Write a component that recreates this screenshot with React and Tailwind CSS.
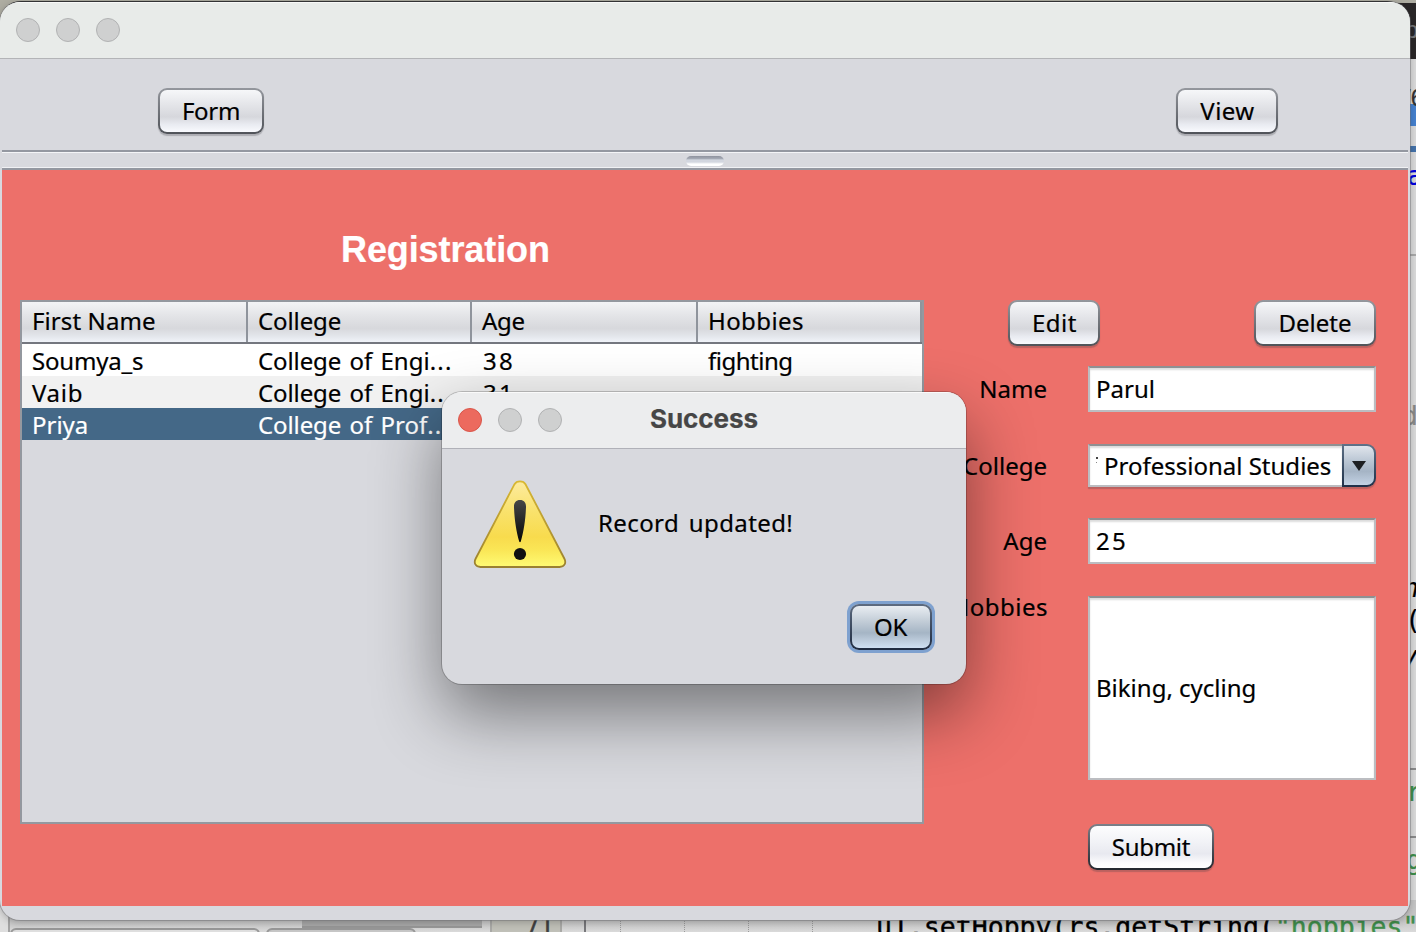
import React from "react";

const BTN_TEXT = "text-[24px] leading-[32px] whitespace-pre";

function Button({ children, className = "", tone = "plain", text = "" }) {
  const border =
    tone === "strong"
      ? "bg-linear-to-b from-[#7b8089] to-[#23272f]"
      : "bg-linear-to-b from-[#94979d] to-[#505359]";
  const face =
    tone === "strong"
      ? "bg-[linear-gradient(to_bottom,#fdfdfe_0%,#f1f2f6_40%,#e8e9f0_66%,#fbfbfd_88%,#ffffff_100%)]"
      : "bg-[linear-gradient(to_bottom,#f6f7f9_0%,#e4e5e9_35%,#d6d7dc_64%,#e9ebf1_82%,#f9fafe_100%)]";
  return (
    <button
      className={`h-[46px] shrink-0 rounded-[9px] p-[2px] shadow-[0_2px_1px_rgba(60,60,70,0.28)] ${border} ${className}`}
    >
      <span
        className={`flex h-full w-full items-center justify-center rounded-[7px] ${face} ${BTN_TEXT} ${text}`}
      >
        {children}
      </span>
    </button>
  );
}

function Lights({ red = false }) {
  const gray = "size-6 rounded-full border border-[#b1b2b3] bg-[#cfd0d0]";
  return (
    <div className="flex gap-4">
      <span className={red ? "size-6 rounded-full border border-[#d9564a] bg-[#ec6a5e]" : gray} />
      <span className={gray} />
      <span className={gray} />
    </div>
  );
}

const FIELD =
  "flex w-[288px] shrink-0 items-center border-2 border-[#bcbdc1] border-t-[#8f9092] bg-white pl-[6px] shadow-[inset_0_2px_2px_rgba(0,0,0,0.14)]";

function HeadCell({ children, className }) {
  return (
    <div
      className={`h-10 shrink-0 border-r-2 border-[#8f949c] bg-[linear-gradient(to_bottom,#f3f4f6_0%,#e3e4e7_35%,#d7d8dc_66%,#e2e5ea_84%,#f0f3f9_100%)] leading-[38px] ${className}`}
    >
      {children}
    </div>
  );
}

function Row({ cells, className }) {
  return (
    <div className={`flex h-8 leading-[33px] ${className}`}>
      <span className="w-[226px] pl-[10px]">{cells[0]}</span>
      <span className="w-[224px] pl-[10px]">{cells[1]}</span>
      <span className="w-[226px] pl-[11px] tracking-[2.2px]">{cells[2]}</span>
      <span className="pl-[10px] tracking-[-0.5px]">{cells[3]}</span>
    </div>
  );
}

function College({ rest }) {
  return (
    <>
      <span className="tracking-[-0.1px]">College</span>
      <span className="[word-spacing:2px]"> of {rest}</span>
      <span className="tracking-[1.2px]">...</span>
    </>
  );
}

function Desktop() {
  return (
    <div className="absolute inset-0 overflow-hidden bg-[#dcdcdc] font-['DejaVu_Sans_Mono',monospace] text-[26.5px] leading-8 whitespace-pre">
      <div className="absolute top-0 left-0 h-8 w-full bg-[#aeada2]" />
      <div className="absolute top-[3px] right-0 h-[56px] w-20 bg-[#2a2728]" />
      <div className="absolute top-[1px] left-0 h-7 w-[1408px] rounded-t-[21px] bg-black" />
      <span className="absolute top-[14px] left-[1405px] font-['Liberation_Sans',sans-serif] text-[24px] text-[#77787a]">p</span>
      <div className="absolute top-[104px] left-[1400px] h-[22px] w-4 bg-[#4682d0]" />
      <div className="absolute top-[146px] left-[1400px] h-[6px] w-4 bg-[#4573aa]" />
      <span className="absolute top-[82px] left-[1404px] font-['Liberation_Sans',sans-serif] text-[24px] text-[#333]">/6</span>
      <span className="absolute top-[160px] left-[1407px] text-[#0000e0]">a</span>
      <div className="absolute top-[254px] left-[1400px] h-[2px] w-4 bg-[#a9a9a9]" />
      <span className="absolute top-[400px] left-[1402px] text-[#8a8a8a]">d</span>
      <span className="absolute top-[572px] left-[1403px] text-black italic">n</span>
      <span className="absolute top-[604px] left-[1405px] text-black">(</span>
      <span className="absolute top-[640px] left-[1402px] text-black italic">y</span>
      <div className="absolute top-[768px] left-[1400px] h-[2px] w-4 bg-[#8c8c8c]" />
      <span className="absolute top-[776px] left-[1406px] text-[#3f8f4b]">r</span>
      <div className="absolute top-[836px] left-[1400px] h-[2px] w-4 bg-[#8c8c8c]" />
      <span className="absolute top-[844px] left-[1406px] text-[#3f8f4b]">g</span>
      <div className="absolute top-[900px] left-0 flex h-8 w-full bg-[linear-gradient(to_bottom,#c6c6c6_62%,#dadada_100%)]">
        <div className="w-[10px] shrink-0 border-r-2 border-[#a3a3a3] bg-[#dedede]" />
        <div className="mt-[28px] h-6 w-[250px] shrink-0 rounded-md border-2 border-[#989898] bg-[#dfdfdf]" />
        <div className="mt-[28px] ml-[6px] h-6 w-[150px] shrink-0 rounded-md border-2 border-[#989898] bg-[#c6c6c6]" />
        <div className="-ml-[114px] h-[28px] w-[180px] shrink-0 border-b-2 border-[#989898] bg-[#a9a9a9]" />
        <div className="ml-[8px] w-[72px] shrink-0 border-x-2 border-[#a9a9a6] bg-[#c0c0b8]" />
        <div className="w-[24px] shrink-0 border-r-2 border-[#77777a]" />
        <div className="ml-[34px] w-[64px] shrink-0 border-l border-dotted border-[#9a9a9a]" />
        <div className="w-[64px] shrink-0 border-l border-dotted border-[#9a9a9a]" />
        <div className="w-[64px] shrink-0 border-l border-dotted border-[#9a9a9a]" />
        <div className="w-[64px] shrink-0 border-l border-dotted border-[#9a9a9a]" />
      </div>
      <span className="absolute top-[911px] left-[525px] text-[24px] text-[#404040] [-webkit-text-stroke:0.4px]">71</span>
      <span className="absolute top-[911px] left-[876px] text-black [-webkit-text-stroke:0.4px]">
        u1.setHobby(rs.getString(<span className="text-[#3f8f4b]">"hobbies"</span>
      </span>
    </div>
  );
}

function MainWindow() {
  return (
    <div className="absolute top-[2px] left-0 flex h-[918px] w-[1410px] flex-col overflow-hidden rounded-[20px] bg-[#d8d9de] shadow-[0_0_0_1px_rgba(110,110,115,0.45),0_2px_8px_rgba(0,0,0,0.25)]">
      <div className="flex h-[57px] shrink-0 items-center border-b border-[#b3b4b7] bg-[#e8ebe9] pl-4 shadow-[inset_0_1px_0_#f8f9f8]">
        <Lights />
      </div>
      <div className="mx-[2px] flex h-[93px] shrink-0 justify-between border-b-2 border-[#9498a1] pt-[29px] pr-[130px] pl-[156px]">
        <Button className="w-[106px]" text="tracking-[-0.3px]">Form</Button>
        <Button className="w-[102px]" text="tracking-[0.45px] pl-px">View</Button>
      </div>
      <div className="mx-[2px] flex h-[18px] shrink-0 justify-center border-y border-b-2 border-t-[#f4f5f7] border-b-[#9498a1] pt-[3px] shadow-[inset_0_-1px_0_#f0f1f4]">
        <div className="h-[10px] w-[38px] rounded-full bg-[linear-gradient(to_bottom,#8e929d_0%,#a3a8b3_25%,#d2d6df_40%,#d2d6df_60%,#ffffff_80%,#ffffff_100%)]" />
      </div>
      <div className="mx-[2px] flex h-[736px] shrink-0 bg-[#ed706a]">
        <div className="flex w-[922px] shrink-0 flex-col pl-[18px]">
          <h1 className="mt-[59px] ml-[321px] font-['Liberation_Sans',sans-serif] text-[36px] leading-[42px] font-bold tracking-[-0.1px] text-white">
            Registration
          </h1>
          <div className="mt-[29px] h-[524px] w-[904px] border-2 border-[#94989f] bg-[#d8d9de]">
            <div className="flex border-b-2 border-[#74777f]">
              <HeadCell className="w-[226px] pl-[10px] tracking-[0.1px]">First Name</HeadCell>
              <HeadCell className="w-[224px] pl-[10px] tracking-[-0.1px]">College</HeadCell>
              <HeadCell className="w-[226px] pl-[10px] tracking-[-0.3px]">Age</HeadCell>
              <HeadCell className="w-[224px] pl-[10px] tracking-[0.4px]">Hobbies</HeadCell>
            </div>
            <Row
              className="bg-white"
              cells={[<span className="tracking-[-0.2px]">Soumya_s</span>, <College rest="Engi" />, "38", "fighting"]}
            />
            <Row
              className="bg-[#f1f1f1]"
              cells={[<span className="tracking-[0.7px]">Vaib</span>, <College rest="Engi" />, "31", ""]}
            />
            <Row
              className="bg-[#446887] text-white"
              cells={[<span>Priya</span>, <College rest="Prof" />, "", ""]}
            />
          </div>
        </div>

        <div className="flex flex-col">
          <div className="mt-[130px] flex gap-[154px] pl-[84px]">
            <Button className="w-[92px]" text="tracking-[0.5px] pl-px">Edit</Button>
            <Button className="w-[122px]">Delete</Button>
          </div>
          <div className="mt-5 flex h-[46px] items-center gap-[41px]">
            <label className="w-[123px] text-right">Name</label>
            <div className={`h-[46px] ${FIELD}`}>
              <span>Parul</span>
            </div>
          </div>
          <div className="mt-8 flex h-[43px] items-center gap-[41px]">
            <label className="w-[123px] text-right">College</label>
            <div className="flex h-[43px] w-[288px] rounded-r-[9px] shadow-[0_2px_1px_rgba(60,60,70,0.28)]">
              <div className="flex w-[254px] items-center border-2 border-r-0 border-[#bcbdc1] border-t-[#8f9092] bg-white pl-[6px] shadow-[inset_0_2px_2px_rgba(0,0,0,0.14)]">
                <span className="flex w-[6px] shrink-0 flex-col gap-[3px] pb-[11px]">
                  <span className="size-[2px] bg-[#444]" />
                  <span className="size-[1px] bg-[#888]" />
                </span>
                <span className="pl-[2px] whitespace-pre">Professional Studies</span>
              </div>
              <div className="w-[34px] rounded-r-[9px] bg-linear-to-b from-[#5f7288] to-[#1f3048] p-[2px]">
                <div className="flex h-full items-center justify-center rounded-r-[7px] bg-[linear-gradient(to_bottom,#e0e5ec_0%,#b9c5d3_40%,#a5b4c5_65%,#c3d2e4_100%)]">
                  <svg width="14" height="10" viewBox="0 0 14 10">
                    <path d="M0 0H14L7 10Z" fill="#1d1f22" />
                  </svg>
                </div>
              </div>
            </div>
          </div>
          <div className="mt-[31px] flex h-[46px] items-center gap-[41px]">
            <label className="w-[123px] text-right">Age</label>
            <div className={`h-[46px] ${FIELD}`}>
              <span className="tracking-[2.2px]">25</span>
            </div>
          </div>
          <div className="mt-8 flex h-[184px] gap-10">
            <label className="-mt-[5px] w-[124px] text-right tracking-[0.5px]">Hobbies</label>
            <div className={`h-[184px] ${FIELD}`}>
              <span>Biking, cycling</span>
            </div>
          </div>
          <div className="mt-11 pl-[164px]">
            <Button className="w-[126px]" tone="strong" text="tracking-[-0.3px]">Submit</Button>
          </div>
        </div>
      </div>
    </div>
  );
}

function WarningIcon() {
  return (
    <svg width="94" height="90" viewBox="0 0 94 90" className="shrink-0">
      <defs>
        <linearGradient id="face" x1="0" y1="0" x2="0" y2="1">
          <stop offset="0" stopColor="#fdeb9f" />
          <stop offset="0.35" stopColor="#f9e26c" />
          <stop offset="0.65" stopColor="#f8db4d" />
          <stop offset="0.8" stopColor="#fae656" />
          <stop offset="1" stopColor="#fffb74" />
        </linearGradient>
        <linearGradient id="edge" x1="0" y1="0" x2="0" y2="1">
          <stop offset="0" stopColor="#d9b832" />
          <stop offset="1" stopColor="#9a8030" />
        </linearGradient>
        <linearGradient id="mark" x1="0" y1="0" x2="0" y2="1">
          <stop offset="0" stopColor="#474747" />
          <stop offset="1" stopColor="#050505" />
        </linearGradient>
      </defs>
      <path
        d="M41.5 4.2C43.6 0.3 50.4 0.3 52.5 4.2L91.3 78.5C93.6 83 91.5 87 86.5 87H7.5C2.5 87 0.4 83 2.7 78.5Z"
        fill="url(#face)"
        stroke="url(#edge)"
        strokeWidth="1.8"
      />
      <path d="M47 20C51 20 53.2 22.8 53 27C52.6 40 50.5 52 47.8 61.5Q47 63 46.2 61.5C43.5 52 41.4 40 41 27C40.8 22.8 43 20 47 20Z" fill="url(#mark)" />
      <circle cx="47" cy="74" r="6.1" fill="#111" />
    </svg>
  );
}

function Dialog() {
  return (
    <div className="absolute top-[392px] left-[442px] flex h-[292px] w-[524px] flex-col overflow-hidden rounded-[20px] bg-[#d8d9de] shadow-[0_0_0_1px_rgba(0,0,0,0.2),0_30px_68px_rgba(0,0,0,0.46)]">
      <div className="flex h-[57px] shrink-0 items-center border-b border-[#b0b1b8] bg-[#ecedee] pl-4 shadow-[inset_0_1px_0_#fafafa]">
        <Lights red />
        <span className="ml-[88px] pb-[2px] font-['Inter',sans-serif] text-[26px] font-bold tracking-[-0.05px] text-[#464646]">
          Success
        </span>
      </div>
      <div className="flex pt-[31px] pl-[31px]">
        <WarningIcon />
        <span className="mt-[27px] ml-[31px] text-[24px] leading-8 tracking-[0.4px] [word-spacing:3px]">Record updated!</span>
      </div>
      <div className="mt-[34px] flex justify-end pr-[34px]">
        <button className="h-[46px] w-[82px] rounded-[9px] bg-linear-to-b from-[#5d6b80] to-[#1f2b40] p-[2px] shadow-[0_0_0_3px_#7ea1cf]">
          <span className="flex h-full items-center justify-center rounded-[7px] bg-[linear-gradient(to_bottom,#e9edf2_0%,#c4ced8_35%,#a5b5c5_64%,#bccbdb_82%,#cfe0f2_100%)] pr-px text-[24px] tracking-[-0.2px]">
            OK
          </span>
        </button>
      </div>
    </div>
  );
}

export default function App() {
  return (
    <div className="relative h-[932px] w-[1416px] overflow-hidden font-['Noto_Sans',sans-serif] text-[24px] leading-8 text-black [-webkit-text-stroke:0.2px]">
      <Desktop />
      <MainWindow />
      <Dialog />
    </div>
  );
}
